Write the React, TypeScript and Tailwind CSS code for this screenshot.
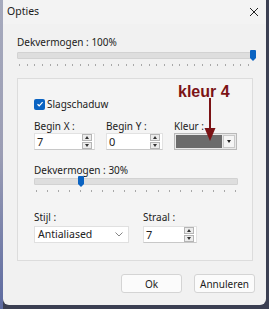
import React from 'react';

const font = { fontFamily: '"Noto Sans", "Open Sans", sans-serif' };

function Spinner() {
  return (
    <div className="flex flex-col gap-[1px] mr-[2px]">
      <div className="w-[10px] h-[7px] bg-[#ececec] border border-[#b5b5b5] flex items-center justify-center">
        <div className="w-0 h-0 border-l-[2.5px] border-r-[2.5px] border-b-[3px] border-l-transparent border-r-transparent border-b-[#333]" />
      </div>
      <div className="w-[10px] h-[7px] bg-[#ececec] border border-[#b5b5b5] flex items-center justify-center">
        <div className="w-0 h-0 border-l-[2.5px] border-r-[2.5px] border-t-[3px] border-l-transparent border-r-transparent border-t-[#333]" />
      </div>
    </div>
  );
}

function NumberBox({ value, width }: { value: string; width: string }) {
  return (
    <div className={`${width} h-[17px] bg-white border border-[#e2e2e2] border-b-[#c8c8c8] flex items-center justify-between`}>
      <span className="pl-[2px] text-[11px] leading-none text-[#222]">{value}</span>
      <Spinner />
    </div>
  );
}

function Slider({ ticks, pos }: { ticks: number; pos: number }) {
  return (
    <div className="relative">
      <div className="h-[7px] bg-[#dedede] border border-[#d2d2d2] rounded-[1px]" />
      <div className="absolute top-[-2px]" style={{ left: `${pos}px` }}>
        <div className="w-[6px] h-[8px] bg-[#0a63c2] rounded-t-[1px]" />
        <div className="w-0 h-0 border-l-[3px] border-r-[3px] border-t-[3px] border-l-transparent border-r-transparent border-t-[#0a63c2]" />
      </div>
      <div className="flex justify-between px-[2px] mt-[5px]">
        {Array.from({ length: ticks }).map((_, i) => (
          <div key={i} className="w-[1px] h-[2px] bg-[#a8a8a8]" />
        ))}
      </div>
    </div>
  );
}

export default function App() {
  return (
    <div className="w-[269px] h-[309px] bg-[#3b3f52] flex overflow-hidden" style={font}>
      <div className="w-[3px] h-full bg-gradient-to-b from-[#a6aabd] via-[#9b9db4] to-[#5d6aa0]" />
      <div className="w-[263px] h-[305px] bg-[#f1f1f1] rounded-b-[6px] flex flex-col">
        {/* title bar */}
        <div className="h-[24px] flex items-center justify-between pl-[4px] pr-[7px] bg-[#f3f3f3]">
          <span className="text-[10.5px] text-[#1b1b1b]">Opties</span>
          <svg width="10" height="10" viewBox="0 0 10 10">
            <path d="M1 1 L9 9 M9 1 L1 9" stroke="#222" strokeWidth="1" />
          </svg>
        </div>

        <div className="px-[14px]">
          <div className="text-[10px] leading-[14px] text-[#1b1b1b] mt-[11px]">Dekvermogen : 100%</div>
          <div className="mt-[3px] pr-[1px]">
            <Slider ticks={31} pos={233} />
          </div>

          {/* group box */}
          <div className="relative mt-[12px] h-[183px] w-[236px] border border-[#dcdcdc] bg-[#f4f4f4] px-[16px] pt-[18px]">
            <div className="flex items-center gap-[2px]">
              <div className="w-[11px] h-[11px] bg-[#0a63c2] rounded-[2px] flex items-center justify-center">
                <svg width="8" height="8" viewBox="0 0 8 8">
                  <path d="M1.5 4.2 L3.2 5.8 L6.6 2.2" stroke="white" strokeWidth="1.2" fill="none" />
                </svg>
              </div>
              <span className="text-[10px] leading-[14px] text-[#1b1b1b]">Slagschaduw</span>
            </div>

            <div className="flex gap-[11px] mt-[8px]">
              <div className="flex flex-col">
                <span className="text-[10px] leading-[14px] text-[#1b1b1b]">Begin X :</span>
                <NumberBox value="7" width="w-[61px]" />
              </div>
              <div className="flex flex-col">
                <span className="text-[10px] leading-[14px] text-[#1b1b1b]">Begin Y :</span>
                <NumberBox value="0" width="w-[57px]" />
              </div>
              <div className="flex flex-col">
                <span className="text-[10px] leading-[14px] text-[#1b1b1b]">Kleur :</span>
                <div className="w-[63px] h-[17px] border border-[#b9b9b9] bg-[#e9e9e9] flex items-center p-[1px] gap-[1px]">
                  <div className="flex-1 h-full bg-[#6b6b6b]" />
                  <div className="w-[12px] h-full bg-[#f5f5f5] border border-[#c9c9c9] flex items-center justify-center">
                    <div className="w-0 h-0 border-l-[2.5px] border-r-[2.5px] border-t-[3px] border-l-transparent border-r-transparent border-t-[#222]" />
                  </div>
                </div>
              </div>
            </div>

            <div className="text-[10px] leading-[14px] text-[#1b1b1b] mt-[13px]">Dekvermogen : 30%</div>
            <div className="mt-[1px] w-[204px]">
              <Slider ticks={19} pos={44} />
            </div>

            <div className="flex gap-[14px] mt-[18px]">
              <div className="flex flex-col gap-[2px]">
                <span className="text-[10px] leading-[14px] text-[#1b1b1b]">Stijl :</span>
                <div className="w-[95px] h-[17px] bg-white border border-[#e0e0e0] flex items-center justify-between pl-[3px] pr-[5px]">
                  <span className="text-[10.5px] leading-none text-[#222]">Antialiased</span>
                  <svg width="8" height="5" viewBox="0 0 8 5">
                    <path d="M0.5 0.5 L4 4 L7.5 0.5" stroke="#777" strokeWidth="0.9" fill="none" />
                  </svg>
                </div>
              </div>
              <div className="flex flex-col gap-[2px]">
                <span className="text-[10px] leading-[14px] text-[#1b1b1b]">Straal :</span>
                <NumberBox value="7" width="w-[54px]" />
              </div>
            </div>

            {/* annotation */}
            <span
              className="absolute left-[160px] top-[4px] text-[16px] font-bold leading-[18px] text-[#7b1315]"
              style={{ fontFamily: '"Liberation Sans", Arial, sans-serif' }}
            >
              kleur 4
            </span>
            <svg className="absolute left-[185px] top-[19px]" width="14" height="44" viewBox="0 0 14 44">
              <path d="M7 0 L7 32" stroke="#7b1315" strokeWidth="2" />
              <path d="M1.5 30 L12.5 30 L7 43 Z" fill="#7b1315" />
            </svg>
          </div>
        </div>

        {/* buttons */}
        <div className="flex justify-end gap-[12px] pr-[11px] mt-[13px]">
          <button className="w-[61px] h-[19px] bg-[#fbfbfb] border border-[#d4d4d4] rounded-[3px] text-[10px] text-[#1b1b1b] leading-none">
            Ok
          </button>
          <button className="w-[61px] h-[19px] bg-[#fbfbfb] border border-[#d4d4d4] rounded-[3px] text-[10px] text-[#1b1b1b] leading-none">
            Annuleren
          </button>
        </div>
      </div>
    </div>
  );
}
